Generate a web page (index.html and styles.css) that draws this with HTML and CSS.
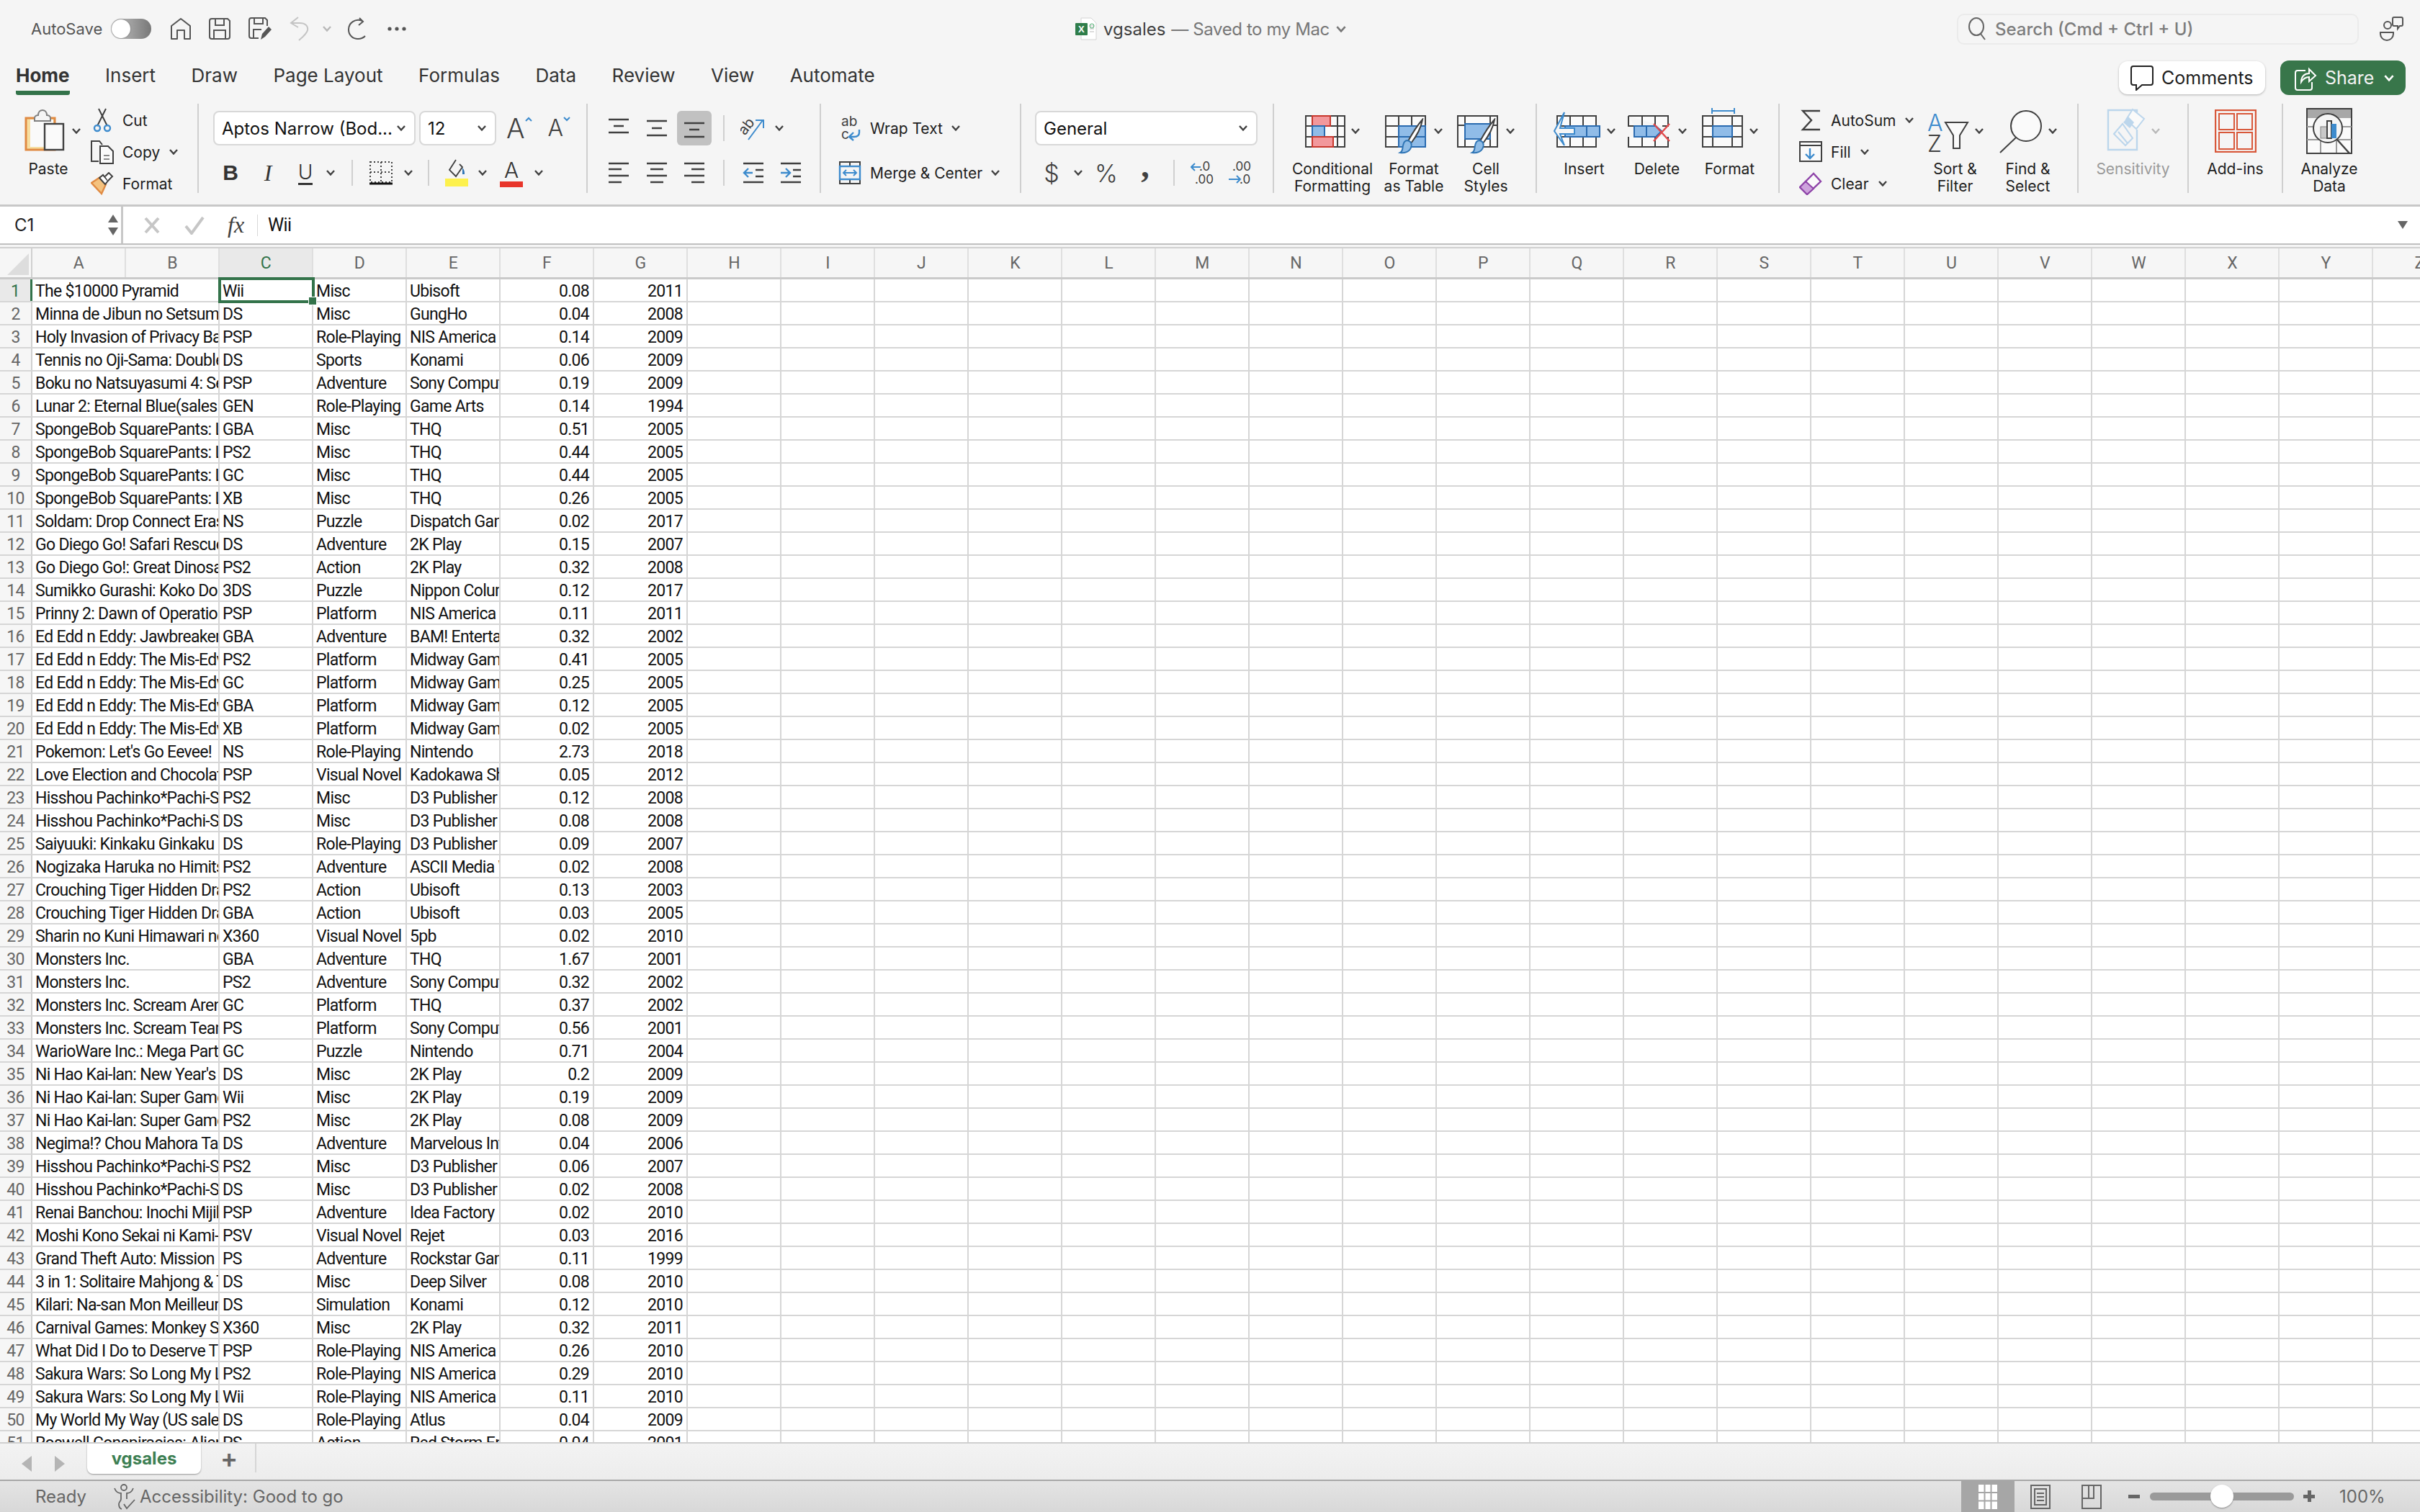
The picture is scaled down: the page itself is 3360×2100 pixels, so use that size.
FILE: index.html
```html
<!DOCTYPE html>
<html lang="en">

<head>
    <meta charset="UTF-8">
    <title>vgsales</title>
    <link rel="stylesheet" href="styles.css">
</head>

<body>
    <svg class="defs" width="0" height="0">
        <symbol id="chev" viewBox="0 0 12 8"><path d="M1 1l5 5.5L11 1" fill="none" stroke="currentColor" stroke-width="2.4"/></symbol>
        <symbol id="brush" viewBox="0 0 36 50"><path d="M33 2C31 14 24 26 17 35l-4-3C19 21 26 10 33 2z" fill="#fff" stroke="#404040" stroke-width="2"/><path d="M12 31c5 1 7 5 5 10-2 6-9 8-15 7 4-2 3-6 4-10 1-5 3-7 6-7z" fill="#8fbce6" stroke="#2f75b5" stroke-width="2"/></symbol>
        <symbol id="align" viewBox="0 0 30 24"><path d="M1 2h28M8 12h14M1 22h28" stroke="#404040" stroke-width="2.4"/></symbol>
    </svg>

    <!-- title bar -->
    <header class="title-bar">
        <div class="quick">
            <span class="autosave">AutoSave</span>
            <span class="toggle"></span>
            <svg class="q-home" width="30" height="32" viewBox="0 0 30 32"><path d="M2 30V12L15 2l13 10v18h-8V18h-10v12z" fill="none" stroke="#555" stroke-width="2" stroke-linejoin="round"/></svg>
            <svg class="q-save" width="30" height="30" viewBox="0 0 30 30"><path d="M4 1h22l3 3v22a3 3 0 0 1-3 3H4a3 3 0 0 1-3-3V4a3 3 0 0 1 3-3zM9 1v9h12V1M7 29V17h16v12" fill="none" stroke="#555" stroke-width="2"/></svg>
            <svg class="q-saveas" width="32" height="32" viewBox="0 0 32 32"><path d="M14 29H4a3 3 0 0 1-3-3V4a3 3 0 0 1 3-3h19l3 3v8M8 1v8h12V1M7 29V17h11" fill="none" stroke="#555" stroke-width="2"/><path d="M17 31l2-8 9-10 4 4-9 10z" fill="#555"/></svg>
            <svg class="q-undo" width="28" height="34" viewBox="0 0 28 34"><path d="M12 1L2 9l10 6M2 9h12c8 0 12 4 11 10-1 4-6 9-12 14" fill="none" stroke="#c4c4c4" stroke-width="2"/></svg>
            <svg class="chev q-chev" width="12" height="8"><use href="#chev"/></svg>
            <svg class="q-redo" width="30" height="32" viewBox="0 0 30 32"><path d="M21 5C11 1 2 8 2 17c0 8 6 13 13 13 4 0 7-1 10-4M17 1l5 5-6 5" fill="none" stroke="#555" stroke-width="2"/></svg>
            <svg class="q-dots" width="26" height="6" viewBox="0 0 26 6"><circle cx="3" cy="3" r="2.6" fill="#555"/><circle cx="13" cy="3" r="2.6" fill="#555"/><circle cx="23" cy="3" r="2.6" fill="#555"/></svg>
        </div>
        <div class="doc-title">
            <svg width="30" height="32" viewBox="0 0 30 32"><path d="M8 1h14l7 7v23H8z" fill="#fff" stroke="#d4d4d4"/><path d="M20 12h6M20 16h6M20 20h6" stroke="#bbb"/><circle cx="23" cy="12" r="3" fill="none" stroke="#4aa96c"/><rect x="0" y="8" width="17" height="17" rx="1" fill="#2f7d4a"/><text x="4" y="21" class="x-mark">X</text></svg>
            <span class="doc-name">vgsales</span>
            <span class="doc-state">— Saved to my Mac</span>
            <svg class="chev doc-chev" width="14" height="9"><use href="#chev"/></svg>
        </div>
        <div class="search">
            <svg width="26" height="32" viewBox="0 0 26 32"><ellipse cx="12" cy="13" rx="10" ry="12" fill="none" stroke="#666" stroke-width="2"/><path d="M18 23l6 8" stroke="#666" stroke-width="2"/></svg>
            <span>Search (Cmd + Ctrl + U)</span>
        </div>
        <svg class="people" width="34" height="34" viewBox="0 0 34 34"><circle cx="12" cy="12" r="5" fill="none" stroke="#555" stroke-width="2"/><path d="M2 22h18v2a9 9 0 0 1-18 0z" fill="none" stroke="#555" stroke-width="2"/><path d="M21 1h10a2 2 0 0 1 2 2v8a2 2 0 0 1-2 2h-2l-3 4v-4h-5a2 2 0 0 1-2-2V3a2 2 0 0 1 2-2z" fill="none" stroke="#555" stroke-width="2"/></svg>
    </header>

    <!-- ribbon tabs -->
    <nav class="tabs">
        <span class="tab active">Home</span>
        <span class="tab">Insert</span>
        <span class="tab">Draw</span>
        <span class="tab">Page Layout</span>
        <span class="tab">Formulas</span>
        <span class="tab">Data</span>
        <span class="tab">Review</span>
        <span class="tab">View</span>
        <span class="tab">Automate</span>
        <div class="tab-actions">
            <button class="comments">
                <svg width="34" height="36" viewBox="0 0 34 36"><path d="M5 2h24a3 3 0 0 1 3 3v20a3 3 0 0 1-3 3H17l-8 7v-7H5a3 3 0 0 1-3-3V5a3 3 0 0 1 3-3z" fill="#fff" stroke="#222" stroke-width="2"/></svg>
                Comments
            </button>
            <button class="share">
                <svg width="32" height="36" viewBox="0 0 32 36"><path d="M16 8H5a3 3 0 0 0-3 3v21a3 3 0 0 0 3 3h17a3 3 0 0 0 3-3v-8" fill="none" stroke="#fff" stroke-width="2"/><path d="M10 24c0-8 5-12 11-12V6l9 9-9 8v-6c-5 0-8 2-11 7z" fill="none" stroke="#fff" stroke-width="2"/></svg>
                Share
                <svg class="chev share-chev" width="14" height="9"><use href="#chev"/></svg>
            </button>
        </div>
    </nav>

    <!-- ribbon -->
    <section class="ribbon">
        <div class="group g-clip">
            <div class="big paste">
                <div class="ico">
                    <svg width="56" height="64" viewBox="0 0 56 64"><rect x="2" y="14" width="40" height="44" fill="#f7dea0" stroke="#e08a42" stroke-width="3"/><rect x="8" y="16" width="32" height="38" fill="#fafafa"/><path d="M14 14c0-3 3-4 5-4 0-5 3-7 6-7s6 2 6 7c2 0 5 1 5 4v4H14z" fill="#f5f5f5" stroke="#808080" stroke-width="2"/><rect x="28" y="22" width="26" height="36" fill="#fafafa" stroke="#404040" stroke-width="2.4"/></svg>
                    <svg class="chev paste-chev" width="12" height="8"><use href="#chev"/></svg>
                </div>
                <span class="big-label">Paste</span>
            </div>
            <div class="small-list">
                <div class="small">
                    <svg width="32" height="34" viewBox="0 0 32 34"><path d="M11 1l12 24M21 1L9 25" stroke="#404040" stroke-width="2"/><circle cx="9" cy="28" r="4" fill="none" stroke="#3d8bcd" stroke-width="2.4"/><circle cx="23" cy="28" r="4" fill="none" stroke="#3d8bcd" stroke-width="2.4"/></svg>
                    <span>Cut</span>
                </div>
                <div class="small">
                    <svg width="32" height="34" viewBox="0 0 32 34"><path d="M11 30H1V2h11l4 5" fill="none" stroke="#404040" stroke-width="2"/><path d="M13 9h11l7 7v17H13z" fill="#fafafa" stroke="#404040" stroke-width="2"/><path d="M18 22h8M18 27h8" stroke="#666" stroke-width="1.6"/></svg>
                    <span>Copy</span>
                    <svg class="chev" width="12" height="8"><use href="#chev"/></svg>
                </div>
                <div class="small">
                    <svg width="32" height="32" viewBox="0 0 32 32"><path d="M1 15l12-8 8 10-6 13z" fill="#f4c27f" stroke="#e08a42" stroke-width="2.4"/><path d="M12 8l8 9 4-5-7-8z" fill="#fff" stroke="#404040" stroke-width="2"/><path d="M20 6l5-5 5 5-6 6" fill="#fff" stroke="#404040" stroke-width="2"/></svg>
                    <span>Format</span>
                </div>
            </div>
        </div>

        <div class="group g-font">
            <div class="font-row-a">
                <div class="select font-name"><span>Aptos Narrow (Bod...</span><svg class="chev" width="12" height="8"><use href="#chev"/></svg></div>
                <div class="select font-size"><span>12</span><svg class="chev" width="12" height="8"><use href="#chev"/></svg></div>
                <span class="grow">A<svg width="10" height="7" viewBox="0 0 10 7"><path d="M1 6l4-4 4 4" fill="none" stroke="#3d8bcd" stroke-width="2"/></svg></span>
                <span class="shrink">A<svg width="10" height="7" viewBox="0 0 10 7"><path d="M1 1l4 4 4-4" fill="none" stroke="#3d8bcd" stroke-width="2"/></svg></span>
            </div>
            <div class="font-row-b">
                <span class="t-bold">B</span>
                <span class="t-ital">I</span>
                <span class="t-under">U</span>
                <svg class="chev" width="12" height="8"><use href="#chev"/></svg>
                <i class="vsep"></i>
                <svg width="32" height="34" viewBox="0 0 32 34"><path d="M1 2h30v28H1zM16 2v28M1 16h30" fill="none" stroke="#404040" stroke-width="2" stroke-dasharray="2 3"/><path d="M0 32h32" stroke="#111" stroke-width="3"/></svg>
                <svg class="chev" width="12" height="8"><use href="#chev"/></svg>
                <i class="vsep"></i>
                <svg width="34" height="38" viewBox="0 0 34 38"><path d="M16 1l-9 14 9 9 9-13-4-4" fill="#f5f5f5" stroke="#404040" stroke-width="1.8"/><path d="M25 12c3 3 3 6 3 9h-3z" fill="#2f75b5"/><rect x="1" y="27" width="32" height="11" fill="#fdf14d"/></svg>
                <svg class="chev" width="12" height="8"><use href="#chev"/></svg>
                <span class="t-color">A</span>
                <svg class="chev" width="12" height="8"><use href="#chev"/></svg>
            </div>
        </div>

        <div class="group g-align">
            <div class="align-row-a">
                <svg width="30" height="30" viewBox="0 0 30 30"><path d="M1 3h28M8 12h14M1 21h28" stroke="#404040" stroke-width="2.4"/></svg>
                <svg width="30" height="30" viewBox="0 0 30 30"><use href="#align" width="30" height="24" y="3"/></svg>
                <span class="on-box"><svg width="30" height="30" viewBox="0 0 30 30"><path d="M1 8h28M8 17h14M1 27h28" stroke="#404040" stroke-width="2.4"/></svg></span>
                <i class="vsep"></i>
                <svg width="34" height="34" viewBox="0 0 34 34"><text x="0" y="21" transform="rotate(-52 10 18)" class="orient">ab</text><path d="M11 33L31 6M21 6h11v11" fill="none" stroke="#3d8bcd" stroke-width="2"/></svg>
                <svg class="chev" width="12" height="8"><use href="#chev"/></svg>
            </div>
            <div class="align-row-b">
                <svg width="30" height="30" viewBox="0 0 30 30"><path d="M1 2h28M1 10h18M1 19h28M1 28h18" stroke="#404040" stroke-width="2.4"/></svg>
                <svg width="30" height="30" viewBox="0 0 30 30"><path d="M1 2h28M6 10h18M1 19h28M6 28h18" stroke="#404040" stroke-width="2.4"/></svg>
                <svg width="30" height="30" viewBox="0 0 30 30"><path d="M1 2h28M11 10h18M1 19h28M11 28h18" stroke="#404040" stroke-width="2.4"/></svg>
                <i class="vsep"></i>
                <svg width="30" height="30" viewBox="0 0 30 30"><path d="M1 2h28M18 11h11M18 20h11M1 28h28" stroke="#404040" stroke-width="2.4"/><path d="M14 15H2M8 9l-6 6 6 6" fill="none" stroke="#3d8bcd" stroke-width="2.4"/></svg>
                <svg width="30" height="30" viewBox="0 0 30 30"><path d="M1 2h28M18 11h11M18 20h11M1 28h28" stroke="#404040" stroke-width="2.4"/><path d="M1 15h12M8 9l6 6-6 6" fill="none" stroke="#3d8bcd" stroke-width="2.4"/></svg>
            </div>
        </div>

        <div class="group g-wrap">
            <div class="wrap-item">
                <svg width="32" height="36" viewBox="0 0 32 36"><text x="4" y="15" class="wrap-ab">ab</text><text x="4" y="33" class="wrap-ab">c</text><path d="M29 20v4c0 4-3 6-7 6h-6M21 24l-6 6 6 5" fill="none" stroke="#3d8bcd" stroke-width="2.4"/></svg>
                <span>Wrap Text</span>
                <svg class="chev" width="12" height="8"><use href="#chev"/></svg>
            </div>
            <div class="wrap-item">
                <svg width="32" height="32" viewBox="0 0 32 32"><path d="M2 1h28v30H2zM16 1v6M16 25v6M2 7h28" fill="none" stroke="#404040" stroke-width="2"/><rect x="2" y="7" width="28" height="18" fill="none" stroke="#3d8bcd" stroke-width="2.4"/><path d="M7 16h18M11 12l-4 4 4 4M21 12l4 4-4 4" fill="none" stroke="#3d8bcd" stroke-width="2"/></svg>
                <span>Merge &amp; Center</span>
                <svg class="chev" width="12" height="8"><use href="#chev"/></svg>
            </div>
        </div>

        <div class="group g-number">
            <div class="select num-format"><span>General</span><svg class="chev" width="12" height="8"><use href="#chev"/></svg></div>
            <div class="number-row">
                <span class="t-dollar">$</span>
                <svg class="chev" width="12" height="8"><use href="#chev"/></svg>
                <span class="t-pct">%</span>
                <span class="t-comma">,</span>
                <i class="vsep"></i>
                <svg class="dec-ico" width="36" height="34" viewBox="0 0 36 34"><text x="12" y="14" class="dec">.0</text><text x="6" y="32" class="dec">.00</text><path d="M14 9H1M6 4L1 9l5 5" fill="none" stroke="#3d8bcd" stroke-width="2"/></svg>
                <svg class="dec-ico" width="36" height="34" viewBox="0 0 36 34"><text x="6" y="14" class="dec">.00</text><text x="16" y="32" class="dec">.0</text><path d="M1 26h16M12 21l5 5-5 5" fill="none" stroke="#3d8bcd" stroke-width="2"/></svg>
            </div>
        </div>

        <div class="group g-styles">
            <div class="big w-cond">
                <div class="ico">
                    <svg width="56" height="64" viewBox="0 0 56 64"><path d="M1 11h54v43H1zM10 11v43M27 11v43M45 11v43M1 25h54M1 40h54" fill="#fafafa" stroke="#404040" stroke-width="2"/><rect x="10" y="11" width="25" height="14" fill="#f2989c" stroke="#c8372d" stroke-width="2"/><rect x="10" y="25" width="17" height="15" fill="#90bce8" stroke="#2a6bb0" stroke-width="2"/><rect x="10" y="40" width="29" height="14" fill="#f2989c" stroke="#c8372d" stroke-width="2"/></svg>
                    <svg class="chev" width="12" height="8"><use href="#chev"/></svg>
                </div>
                <span class="big-label">Conditional<br>Formatting</span>
            </div>
            <div class="big w-table">
                <div class="ico">
                    <svg width="60" height="64" viewBox="0 0 60 64"><path d="M1 11h55v43H1zM19 11v43M37 11v43M1 25h55M1 40h55" fill="#fafafa" stroke="#404040" stroke-width="2"/><path d="M19 25h37v29H19z" fill="#90bce8" stroke="#2a6bb0" stroke-width="2"/><path d="M19 40h37" stroke="#2a6bb0" stroke-width="2"/><use href="#brush" x="15" y="14" width="44" height="50"/></svg>
                    <svg class="chev" width="12" height="8"><use href="#chev"/></svg>
                </div>
                <span class="big-label">Format<br>as Table</span>
            </div>
            <div class="big w-cellst">
                <div class="ico">
                    <svg width="60" height="64" viewBox="0 0 60 64"><path d="M1 11h55v43H1zM1 24h55M11 11v43M46 11v43" fill="#fafafa" stroke="#404040" stroke-width="2"/><rect x="11" y="22" width="35" height="21" fill="#90bce8" stroke="#2a6bb0" stroke-width="2"/><use href="#brush" x="15" y="14" width="44" height="50"/></svg>
                    <svg class="chev" width="12" height="8"><use href="#chev"/></svg>
                </div>
                <span class="big-label">Cell<br>Styles</span>
            </div>
        </div>

        <div class="group g-cells">
            <div class="big w-cell">
                <div class="ico">
                    <svg width="66" height="64" viewBox="0 0 66 64"><path d="M5 11h54v43H5zM23 11v43M41 11v43M5 25h54M5 40h54" fill="#fafafa" stroke="#404040" stroke-width="2"/><rect x="16" y="25" width="48" height="15" fill="#90bce8" stroke="#2a6bb0" stroke-width="2"/><path d="M46 25v15" stroke="#2a6bb0" stroke-width="2"/><path d="M15 6L1 32l14 20-6-16h20V28H9z" fill="#f5f5f5" stroke="#3d8bcd" stroke-width="2"/></svg>
                    <svg class="chev" width="12" height="8"><use href="#chev"/></svg>
                </div>
                <span class="big-label">Insert</span>
            </div>
            <div class="big w-cell">
                <div class="ico">
                    <svg width="62" height="64" viewBox="0 0 62 64"><path d="M1 11h55v14h-8M1 11v14h8M1 40v14h55V40M20 11v14M38 11v14M20 40v14M38 40v14" fill="#fafafa" stroke="#404040" stroke-width="2"/><path d="M9 25h30l8 7-8 8H9z" fill="#90bce8" stroke="#2a6bb0" stroke-width="2"/><path d="M26 25v15" stroke="#2a6bb0" stroke-width="2"/><path d="M36 22l22 24M58 22L36 46" stroke="#e0484a" stroke-width="2.4"/></svg>
                    <svg class="chev" width="12" height="8"><use href="#chev"/></svg>
                </div>
                <span class="big-label">Delete</span>
            </div>
            <div class="big w-cell">
                <div class="ico">
                    <svg width="58" height="64" viewBox="0 0 58 64"><path d="M1 11h55v43H1zM15 11v43M42 11v43M1 25h55M1 40h55" fill="#fafafa" stroke="#404040" stroke-width="2"/><rect x="15" y="25" width="27" height="15" fill="#90bce8" stroke="#2a6bb0" stroke-width="2"/><path d="M14 0v8M45 0v8M14 4h31" stroke="#3d8bcd" stroke-width="2"/></svg>
                    <svg class="chev" width="12" height="8"><use href="#chev"/></svg>
                </div>
                <span class="big-label">Format</span>
            </div>
        </div>

        <div class="group g-edit">
            <div class="small-list">
                <div class="small">
                    <svg width="32" height="30" viewBox="0 0 32 30"><path d="M29 2H5l12 13L5 28h24" fill="none" stroke="#404040" stroke-width="2.4"/></svg>
                    <span>AutoSum</span>
                    <svg class="chev" width="12" height="8"><use href="#chev"/></svg>
                </div>
                <div class="small">
                    <svg width="32" height="30" viewBox="0 0 32 30"><path d="M1 1h30v27H1zM1 6h30" fill="#fafafa" stroke="#404040" stroke-width="2"/><path d="M15 10v13M9 18l6 6 6-6" fill="none" stroke="#3d8bcd" stroke-width="2.4"/></svg>
                    <span>Fill</span>
                    <svg class="chev" width="12" height="8"><use href="#chev"/></svg>
                </div>
                <div class="small">
                    <svg width="32" height="32" viewBox="0 0 32 32"><path d="M1 21L20 2l10 11-19 18z" fill="#fafafa" stroke="#8e44a8" stroke-width="2.4"/><path d="M1 21l8-8 11 10-9 8z" fill="#cda2dc" stroke="#8e44a8" stroke-width="2"/></svg>
                    <span>Clear</span>
                    <svg class="chev" width="12" height="8"><use href="#chev"/></svg>
                </div>
            </div>
            <div class="big w-edit">
                <div class="ico">
                    <svg width="58" height="64" viewBox="0 0 58 64"><text x="0" y="32" class="az-a">A</text><text x="0" y="61" class="az-z">Z</text><path d="M25 20h31L45 38v18h-9V38z" fill="#fafafa" stroke="#404040" stroke-width="2"/></svg>
                    <svg class="chev" width="12" height="8"><use href="#chev"/></svg>
                </div>
                <span class="big-label">Sort &amp;<br>Filter</span>
            </div>
            <div class="big w-edit">
                <div class="ico">
                    <svg width="60" height="64" viewBox="0 0 60 64"><ellipse cx="37" cy="25" rx="21" ry="21" fill="#fafafa" stroke="#404040" stroke-width="2"/><path d="M23 41L1 62" stroke="#404040" stroke-width="2"/></svg>
                    <svg class="chev" width="12" height="8"><use href="#chev"/></svg>
                </div>
                <span class="big-label">Find &amp;<br>Select</span>
            </div>
        </div>

        <div class="group g-sens">
            <div class="big w-sens">
                <div class="ico">
                    <svg width="54" height="64" viewBox="0 0 54 64"><path d="M42 6V3H2v55h40V30" fill="none" stroke="#bcd6ec" stroke-width="2.4"/><path d="M36 2l16 13-11 14-14-13z" fill="#fafafa" stroke="#bcd6ec" stroke-width="2"/><path d="M30 12l8 8-6 8-9-8z" fill="#bcd6ec"/><path d="M10 36l12-14 14 20-10 10z" fill="none" stroke="#bcd6ec" stroke-width="2"/><path d="M16 33l13 16" stroke="#bcd6ec" stroke-width="2"/></svg>
                    <svg class="chev sens-chev" width="12" height="8"><use href="#chev"/></svg>
                </div>
                <span class="big-label sens-label">Sensitivity</span>
            </div>
        </div>

        <div class="group g-addins">
            <div class="big w-addins">
                <div class="ico">
                    <svg width="58" height="60" viewBox="0 0 58 60"><rect x="1" y="1" width="56" height="58" fill="none" stroke="#d8583a" stroke-width="2.4"/><path d="M6 6h21v22H6zM31 6h21v22H31zM6 32h21v23H6zM31 32h21v23H31z" fill="none" stroke="#d8583a" stroke-width="2"/></svg>
                </div>
                <span class="big-label">Add-ins</span>
            </div>
        </div>

        <div class="group g-analyze">
            <div class="big w-analyze">
                <div class="ico">
                    <svg width="64" height="64" viewBox="0 0 64 64"><rect x="1" y="1" width="62" height="62" fill="#fafafa" stroke="#404040" stroke-width="2"/><rect x="2" y="2" width="60" height="12" fill="#a8a8a8"/><path d="M1 26h62M1 44h62M20 44v18M42 44v18" stroke="#9a9a9a" stroke-width="2"/><circle cx="30" cy="28" r="20" fill="#f5f5f5" stroke="#404040" stroke-width="2"/><rect x="20" y="26" width="10" height="16" fill="#c8c8c8" stroke="#808080"/><rect x="29" y="18" width="6" height="24" fill="#f5f5f5" stroke="#404040" stroke-width="2"/><rect x="35" y="22" width="7" height="20" fill="#3d8bcd"/><path d="M43 44l18 20" stroke="#404040" stroke-width="2.4"/></svg>
                </div>
                <span class="big-label">Analyze<br>Data</span>
            </div>
        </div>
    </section>

    <!-- formula bar -->
    <section class="formula-bar">
        <div class="name-box">
            <span>C1</span>
            <div class="stepper"><i class="tri-up"></i><i class="tri-down"></i></div>
        </div>
        <svg class="fb-x" width="24" height="26" viewBox="0 0 24 26"><path d="M3 3l18 20M21 3L3 23" stroke="#c6c6c6" stroke-width="4"/></svg>
        <svg class="fb-ok" width="28" height="26" viewBox="0 0 28 26"><path d="M2 14l8 10L26 2" fill="none" stroke="#c6c6c6" stroke-width="4"/></svg>
        <span class="fx">fx</span>
        <i class="fb-sep"></i>
        <span class="fb-value">Wii</span>
        <i class="tri-down fb-more"></i>
    </section>

    <!-- sheet -->
    <main class="sheet">
        <div class="col-heads">
            <div class="corner"><i></i></div>
            <span>A</span><span>B</span><span class="sel">C</span><span>D</span><span>E</span><span>F</span><span>G</span><span>H</span><span>I</span><span>J</span><span>K</span><span>L</span><span>M</span><span>N</span><span>O</span><span>P</span><span>Q</span><span>R</span><span>S</span><span>T</span><span>U</span><span>V</span><span>W</span><span>X</span><span>Y</span><span>Z</span>
        </div>
        <div class="row first"><b class="rh">1</b><span class="c a">The $10000 Pyramid</span><span class="c">Wii</span><span class="c">Misc</span><span class="c">Ubisoft</span><span class="c n">0.08</span><span class="c n">2011</span><i></i></div>
        <div class="row"><b class="rh">2</b><span class="c a">Minna de Jibun no Setsumei Shoki</span><span class="c">DS</span><span class="c">Misc</span><span class="c">GungHo</span><span class="c n">0.04</span><span class="c n">2008</span><i></i></div>
        <div class="row"><b class="rh">3</b><span class="c a">Holy Invasion of Privacy Badman</span><span class="c">PSP</span><span class="c">Role-Playing</span><span class="c">NIS America</span><span class="c n">0.14</span><span class="c n">2009</span><i></i></div>
        <div class="row"><b class="rh">4</b><span class="c a">Tennis no Oji-Sama: Doubles</span><span class="c">DS</span><span class="c">Sports</span><span class="c">Konami</span><span class="c n">0.06</span><span class="c n">2009</span><i></i></div>
        <div class="row"><b class="rh">5</b><span class="c a">Boku no Natsuyasumi 4: Seto</span><span class="c">PSP</span><span class="c">Adventure</span><span class="c">Sony Computer</span><span class="c n">0.19</span><span class="c n">2009</span><i></i></div>
        <div class="row"><b class="rh">6</b><span class="c a">Lunar 2: Eternal Blue(sales only)</span><span class="c">GEN</span><span class="c">Role-Playing</span><span class="c">Game Arts</span><span class="c n">0.14</span><span class="c n">1994</span><i></i></div>
        <div class="row"><b class="rh">7</b><span class="c a">SpongeBob SquarePants: Lights</span><span class="c">GBA</span><span class="c">Misc</span><span class="c">THQ</span><span class="c n">0.51</span><span class="c n">2005</span><i></i></div>
        <div class="row"><b class="rh">8</b><span class="c a">SpongeBob SquarePants: Lights</span><span class="c">PS2</span><span class="c">Misc</span><span class="c">THQ</span><span class="c n">0.44</span><span class="c n">2005</span><i></i></div>
        <div class="row"><b class="rh">9</b><span class="c a">SpongeBob SquarePants: Lights</span><span class="c">GC</span><span class="c">Misc</span><span class="c">THQ</span><span class="c n">0.44</span><span class="c n">2005</span><i></i></div>
        <div class="row"><b class="rh">10</b><span class="c a">SpongeBob SquarePants: Lights</span><span class="c">XB</span><span class="c">Misc</span><span class="c">THQ</span><span class="c n">0.26</span><span class="c n">2005</span><i></i></div>
        <div class="row"><b class="rh">11</b><span class="c a">Soldam: Drop Connect Erase</span><span class="c">NS</span><span class="c">Puzzle</span><span class="c">Dispatch Games</span><span class="c n">0.02</span><span class="c n">2017</span><i></i></div>
        <div class="row"><b class="rh">12</b><span class="c a">Go Diego Go! Safari Rescue</span><span class="c">DS</span><span class="c">Adventure</span><span class="c">2K Play</span><span class="c n">0.15</span><span class="c n">2007</span><i></i></div>
        <div class="row"><b class="rh">13</b><span class="c a">Go Diego Go!: Great Dinosaur</span><span class="c">PS2</span><span class="c">Action</span><span class="c">2K Play</span><span class="c n">0.32</span><span class="c n">2008</span><i></i></div>
        <div class="row"><b class="rh">14</b><span class="c a">Sumikko Gurashi: Koko Dokode</span><span class="c">3DS</span><span class="c">Puzzle</span><span class="c">Nippon Columbia</span><span class="c n">0.12</span><span class="c n">2017</span><i></i></div>
        <div class="row"><b class="rh">15</b><span class="c a">Prinny 2: Dawn of Operation</span><span class="c">PSP</span><span class="c">Platform</span><span class="c">NIS America</span><span class="c n">0.11</span><span class="c n">2011</span><i></i></div>
        <div class="row"><b class="rh">16</b><span class="c a">Ed Edd n Eddy: Jawbreakers!</span><span class="c">GBA</span><span class="c">Adventure</span><span class="c">BAM! Entertainment</span><span class="c n">0.32</span><span class="c n">2002</span><i></i></div>
        <div class="row"><b class="rh">17</b><span class="c a">Ed Edd n Eddy: The Mis-Edventures</span><span class="c">PS2</span><span class="c">Platform</span><span class="c">Midway Games</span><span class="c n">0.41</span><span class="c n">2005</span><i></i></div>
        <div class="row"><b class="rh">18</b><span class="c a">Ed Edd n Eddy: The Mis-Edventures</span><span class="c">GC</span><span class="c">Platform</span><span class="c">Midway Games</span><span class="c n">0.25</span><span class="c n">2005</span><i></i></div>
        <div class="row"><b class="rh">19</b><span class="c a">Ed Edd n Eddy: The Mis-Edventures</span><span class="c">GBA</span><span class="c">Platform</span><span class="c">Midway Games</span><span class="c n">0.12</span><span class="c n">2005</span><i></i></div>
        <div class="row"><b class="rh">20</b><span class="c a">Ed Edd n Eddy: The Mis-Edventures</span><span class="c">XB</span><span class="c">Platform</span><span class="c">Midway Games</span><span class="c n">0.02</span><span class="c n">2005</span><i></i></div>
        <div class="row"><b class="rh">21</b><span class="c a">Pokemon: Let's Go Eevee!</span><span class="c">NS</span><span class="c">Role-Playing</span><span class="c">Nintendo</span><span class="c n">2.73</span><span class="c n">2018</span><i></i></div>
        <div class="row"><b class="rh">22</b><span class="c a">Love Election and Chocolate</span><span class="c">PSP</span><span class="c">Visual Novel</span><span class="c">Kadokawa Shoten</span><span class="c n">0.05</span><span class="c n">2012</span><i></i></div>
        <div class="row"><b class="rh">23</b><span class="c a">Hisshou Pachinko*Pachi-Slot</span><span class="c">PS2</span><span class="c">Misc</span><span class="c">D3 Publisher</span><span class="c n">0.12</span><span class="c n">2008</span><i></i></div>
        <div class="row"><b class="rh">24</b><span class="c a">Hisshou Pachinko*Pachi-Slot</span><span class="c">DS</span><span class="c">Misc</span><span class="c">D3 Publisher</span><span class="c n">0.08</span><span class="c n">2008</span><i></i></div>
        <div class="row"><b class="rh">25</b><span class="c a">Saiyuuki: Kinkaku Ginkaku no</span><span class="c">DS</span><span class="c">Role-Playing</span><span class="c">D3 Publisher</span><span class="c n">0.09</span><span class="c n">2007</span><i></i></div>
        <div class="row"><b class="rh">26</b><span class="c a">Nogizaka Haruka no Himitsu</span><span class="c">PS2</span><span class="c">Adventure</span><span class="c">ASCII Media Works</span><span class="c n">0.02</span><span class="c n">2008</span><i></i></div>
        <div class="row"><b class="rh">27</b><span class="c a">Crouching Tiger Hidden Dragon</span><span class="c">PS2</span><span class="c">Action</span><span class="c">Ubisoft</span><span class="c n">0.13</span><span class="c n">2003</span><i></i></div>
        <div class="row"><b class="rh">28</b><span class="c a">Crouching Tiger Hidden Dragon</span><span class="c">GBA</span><span class="c">Action</span><span class="c">Ubisoft</span><span class="c n">0.03</span><span class="c n">2005</span><i></i></div>
        <div class="row"><b class="rh">29</b><span class="c a">Sharin no Kuni Himawari no Shoujo</span><span class="c">X360</span><span class="c">Visual Novel</span><span class="c">5pb</span><span class="c n">0.02</span><span class="c n">2010</span><i></i></div>
        <div class="row"><b class="rh">30</b><span class="c a">Monsters Inc.</span><span class="c">GBA</span><span class="c">Adventure</span><span class="c">THQ</span><span class="c n">1.67</span><span class="c n">2001</span><i></i></div>
        <div class="row"><b class="rh">31</b><span class="c a">Monsters Inc.</span><span class="c">PS2</span><span class="c">Adventure</span><span class="c">Sony Computer</span><span class="c n">0.32</span><span class="c n">2002</span><i></i></div>
        <div class="row"><b class="rh">32</b><span class="c a">Monsters Inc. Scream Arena</span><span class="c">GC</span><span class="c">Platform</span><span class="c">THQ</span><span class="c n">0.37</span><span class="c n">2002</span><i></i></div>
        <div class="row"><b class="rh">33</b><span class="c a">Monsters Inc. Scream Team</span><span class="c">PS</span><span class="c">Platform</span><span class="c">Sony Computer</span><span class="c n">0.56</span><span class="c n">2001</span><i></i></div>
        <div class="row"><b class="rh">34</b><span class="c a">WarioWare Inc.: Mega Party</span><span class="c">GC</span><span class="c">Puzzle</span><span class="c">Nintendo</span><span class="c n">0.71</span><span class="c n">2004</span><i></i></div>
        <div class="row"><b class="rh">35</b><span class="c a">Ni Hao Kai-lan: New Year's</span><span class="c">DS</span><span class="c">Misc</span><span class="c">2K Play</span><span class="c n">0.2</span><span class="c n">2009</span><i></i></div>
        <div class="row"><b class="rh">36</b><span class="c a">Ni Hao Kai-lan: Super Game</span><span class="c">Wii</span><span class="c">Misc</span><span class="c">2K Play</span><span class="c n">0.19</span><span class="c n">2009</span><i></i></div>
        <div class="row"><b class="rh">37</b><span class="c a">Ni Hao Kai-lan: Super Game</span><span class="c">PS2</span><span class="c">Misc</span><span class="c">2K Play</span><span class="c n">0.08</span><span class="c n">2009</span><i></i></div>
        <div class="row"><b class="rh">38</b><span class="c a">Negima!? Chou Mahora Taisen</span><span class="c">DS</span><span class="c">Adventure</span><span class="c">Marvelous Interactive</span><span class="c n">0.04</span><span class="c n">2006</span><i></i></div>
        <div class="row"><b class="rh">39</b><span class="c a">Hisshou Pachinko*Pachi-Slot</span><span class="c">PS2</span><span class="c">Misc</span><span class="c">D3 Publisher</span><span class="c n">0.06</span><span class="c n">2007</span><i></i></div>
        <div class="row"><b class="rh">40</b><span class="c a">Hisshou Pachinko*Pachi-Slot</span><span class="c">DS</span><span class="c">Misc</span><span class="c">D3 Publisher</span><span class="c n">0.02</span><span class="c n">2008</span><i></i></div>
        <div class="row"><b class="rh">41</b><span class="c a">Renai Banchou: Inochi Mijikashi</span><span class="c">PSP</span><span class="c">Adventure</span><span class="c">Idea Factory</span><span class="c n">0.02</span><span class="c n">2010</span><i></i></div>
        <div class="row"><b class="rh">42</b><span class="c a">Moshi Kono Sekai ni Kami-sama</span><span class="c">PSV</span><span class="c">Visual Novel</span><span class="c">Rejet</span><span class="c n">0.03</span><span class="c n">2016</span><i></i></div>
        <div class="row"><b class="rh">43</b><span class="c a">Grand Theft Auto: Mission Pack</span><span class="c">PS</span><span class="c">Adventure</span><span class="c">Rockstar Games</span><span class="c n">0.11</span><span class="c n">1999</span><i></i></div>
        <div class="row"><b class="rh">44</b><span class="c a">3 in 1: Solitaire Mahjong &amp; Tangram</span><span class="c">DS</span><span class="c">Misc</span><span class="c">Deep Silver</span><span class="c n">0.08</span><span class="c n">2010</span><i></i></div>
        <div class="row"><b class="rh">45</b><span class="c a">Kilari: Na-san Mon Meilleur Ami</span><span class="c">DS</span><span class="c">Simulation</span><span class="c">Konami</span><span class="c n">0.12</span><span class="c n">2010</span><i></i></div>
        <div class="row"><b class="rh">46</b><span class="c a">Carnival Games: Monkey See</span><span class="c">X360</span><span class="c">Misc</span><span class="c">2K Play</span><span class="c n">0.32</span><span class="c n">2011</span><i></i></div>
        <div class="row"><b class="rh">47</b><span class="c a">What Did I Do to Deserve This</span><span class="c">PSP</span><span class="c">Role-Playing</span><span class="c">NIS America</span><span class="c n">0.26</span><span class="c n">2010</span><i></i></div>
        <div class="row"><b class="rh">48</b><span class="c a">Sakura Wars: So Long My Love</span><span class="c">PS2</span><span class="c">Role-Playing</span><span class="c">NIS America</span><span class="c n">0.29</span><span class="c n">2010</span><i></i></div>
        <div class="row"><b class="rh">49</b><span class="c a">Sakura Wars: So Long My Love</span><span class="c">Wii</span><span class="c">Role-Playing</span><span class="c">NIS America</span><span class="c n">0.11</span><span class="c n">2010</span><i></i></div>
        <div class="row"><b class="rh">50</b><span class="c a">My World My Way (US sales only)</span><span class="c">DS</span><span class="c">Role-Playing</span><span class="c">Atlus</span><span class="c n">0.04</span><span class="c n">2009</span><i></i></div>
        <div class="row"><b class="rh">51</b><span class="c a">Roswell Conspiracies: Aliens</span><span class="c">PS</span><span class="c">Action</span><span class="c">Red Storm Entertainment</span><span class="c n">0.04</span><span class="c n">2001</span><i></i></div>
        <div class="cursor"></div>
    </main>

    <!-- sheet tabs -->
    <section class="sheet-tabs">
        <i class="nav-left"></i>
        <i class="nav-right"></i>
        <span class="sheet-tab">vgsales</span>
        <span class="add-sheet">+</span>
        <i class="tabs-sep"></i>
    </section>

    <!-- status bar -->
    <footer class="status">
        <span class="ready">Ready</span>
        <svg width="32" height="36" viewBox="0 0 32 36"><circle cx="15" cy="5" r="4" fill="none" stroke="#666" stroke-width="1.8"/><path d="M2 6c2 5 6 7 9 7v8c0 3-3 4-3 7s1 6 4 7M28 6c-2 5-6 7-9 7v8" fill="none" stroke="#666" stroke-width="1.8"/><path d="M15 28l4 6 11-12" fill="none" stroke="#666" stroke-width="1.8"/></svg>
        <span class="a11y">Accessibility: Good to go</span>
        <div class="status-right">
            <span class="view on">
                <svg width="26" height="34" viewBox="0 0 26 34"><rect width="26" height="34" fill="#fff"/><path d="M8.5 0v34M17.5 0v34M0 11h26M0 22.5h26" stroke="#a6a6a6" stroke-width="2"/></svg>
            </span>
            <span class="view">
                <svg width="28" height="34" viewBox="0 0 28 34"><rect x="1" y="1" width="26" height="32" fill="none" stroke="#666" stroke-width="2"/><rect x="6" y="6" width="16" height="22" fill="none" stroke="#666" stroke-width="2"/><path d="M9 12h10M9 17h10M9 22h10" stroke="#666" stroke-width="2"/></svg>
            </span>
            <span class="view">
                <svg width="28" height="34" viewBox="0 0 28 34"><path d="M1 1h26v32H1zM1 19h16V1M17 1v18M10 1v18" fill="none" stroke="#666" stroke-width="2"/></svg>
            </span>
            <i class="zoom-minus"></i>
            <div class="slider"><i class="knob"></i></div>
            <i class="zoom-plus"></i>
            <span class="zoom-pct">100%</span>
        </div>
    </footer>
</body>

</html>
```

FILE: styles.css
```css
* {
    box-sizing: border-box;
}

html,
body {
    margin: 0;
    height: 2100px;
    width: 3360px;
    overflow: hidden;
}

body {
    display: flex;
    flex-direction: column;
    background-color: #f5f5f5;
    color: #1d1d1d;
    font-family: Inter, "Noto Sans", sans-serif;
    font-size: 21px;
}

.defs {
    position: absolute;
}

.chev {
    color: #404040;
    flex: none;
}

/* title bar */
.title-bar {
    display: grid;
    grid-template-columns: 1493px 1224px 586px 1fr;
    align-items: center;
    height: 84px;
    padding-bottom: 4px;
    flex: none;
}

.quick {
    display: flex;
    align-items: center;
    padding-left: 43px;
}

.autosave {
    width: 111px;
    font-size: 22px;
    color: #555;
}

.toggle {
    position: relative;
    width: 56px;
    height: 28px;
    border-radius: 14px;
    background: linear-gradient(90deg, #c8c8c8, #777);
}

.toggle::after {
    content: "";
    position: absolute;
    left: 1px;
    top: 1px;
    width: 26px;
    height: 26px;
    border-radius: 50%;
    background-color: #fff;
    box-shadow: 0 0 2px #666;
}

.q-home {
    margin-left: 26px;
}

.q-save {
    margin-left: 24px;
}

.q-saveas {
    margin-left: 25px;
}

.q-undo {
    margin-left: 25px;
}

.q-chev {
    margin-left: 18px;
    color: #b8b8b8;
}

.q-redo {
    margin-left: 22px;
}

.q-dots {
    margin-left: 26px;
}

.doc-title {
    display: flex;
    align-items: center;
    font-size: 24px;
}

.doc-name {
    margin-left: 9px;
    color: #404040;
}

.doc-state {
    margin-left: 8px;
    color: #777;
    letter-spacing: -0.4px;
}

.doc-chev {
    margin-left: 9px;
    color: #777;
}

.x-mark {
    font-family: "Liberation Sans", sans-serif;
    font-size: 13px;
    font-weight: bold;
    fill: #fff;
}

.search {
    display: flex;
    align-items: center;
    gap: 12px;
    width: 558px;
    height: 43px;
    padding-left: 13px;
    border: 2px solid #ebebeb;
    border-radius: 10px;
    color: #7d7d7d;
    font-size: 24px;
    font-weight: 500;
}

/* ribbon tabs */
.tabs {
    display: flex;
    height: 48px;
    flex: none;
    padding: 0 20px 0 22px;
    gap: 49.5px;
    font-size: 26px;
}

.tab {
    height: 48px;
    line-height: 42px;
    border-bottom: 6px solid transparent;
    color: #333;
}

.tab.active {
    font-weight: 700;
    border-bottom-color: #33734a;
    border-bottom-left-radius: 3px;
    border-bottom-right-radius: 3px;
}

.tab-actions {
    display: flex;
    align-items: center;
    gap: 21px;
    margin-left: auto;
}

.comments,
.share {
    display: flex;
    align-items: center;
    height: 46px;
    padding: 0;
    border: none;
    font-family: inherit;
    font-size: 25px;
}

.comments {
    width: 203px;
    gap: 10px;
    padding-left: 15px;
    border-radius: 12px;
    background-color: #fff;
    box-shadow: 0 1px 3px #b0b0b0;
    color: #1d1d1d;
}

.share {
    width: 174px;
    height: 48px;
    gap: 11px;
    padding-left: 19px;
    border-radius: 12px;
    background-color: #38764a;
    color: #f3f3f3;
}

.share-chev {
    margin-left: 3px;
    color: #fff;
}

/* ribbon */
.ribbon {
    display: flex;
    height: 152px;
    flex: none;
    padding-top: 12px;
}

.group {
    display: flex;
    height: 124px;
    border-right: 2px solid #cfcfcf;
    flex: none;
}

.g-clip {
    width: 276px;
    padding-left: 14px;
}

.g-font {
    width: 540px;
    flex-direction: column;
}

.g-align {
    width: 324px;
    flex-direction: column;
    padding-left: 17px;
}

.g-wrap {
    width: 278px;
    flex-direction: column;
    padding-left: 24px;
}

.g-number {
    width: 351px;
    flex-direction: column;
    padding-left: 19px;
}

.g-styles {
    width: 365px;
    padding-left: 21px;
}

.g-cells {
    width: 337px;
    padding-left: 15px;
}

.g-edit {
    width: 415px;
    padding-left: 27px;
}

.g-sens {
    width: 153px;
    justify-content: center;
}

.g-addins {
    width: 131px;
    justify-content: center;
}

.g-analyze {
    border-right: none;
    width: 128px;
    justify-content: center;
}

.big {
    display: flex;
    flex-direction: column;
    align-items: center;
    flex: none;
    margin-top: 6px;
}

.ico {
    display: flex;
    align-items: center;
    gap: 8px;
    height: 64px;
}

.big-label {
    margin-top: 9px;
    line-height: 24px;
    text-align: center;
}

.paste {
    width: 112px;
}

.paste .ico {
    width: 100%;
    padding-left: 20px;
    gap: 10px;
}

.paste .big-label {
    margin-right: 6px;
}

.w-cond {
    width: 120px;
}

.w-table {
    width: 106px;
}

.w-cellst {
    width: 94px;
}

.w-cell,
.w-edit {
    width: 101px;
}

.w-sens,
.w-addins,
.w-analyze {
    width: 120px;
}

.sens-chev {
    color: #b8b8b8;
}

.sens-label {
    color: #9a9a9a;
}

.small-list {
    display: flex;
    flex-direction: column;
    width: 166px;
    height: 132px;
    flex: none;
    margin-top: 1px;
}

.g-clip .small-list {
    width: 134px;
}

.small {
    display: flex;
    align-items: center;
    height: 44px;
    flex: none;
    white-space: nowrap;
}

.small svg:first-child {
    margin-right: 12px;
}

.small .chev {
    margin-left: 13px;
}

.select {
    display: flex;
    align-items: center;
    justify-content: space-between;
    height: 48px;
    padding: 0 12px 0 10px;
    border: 2px solid #d8d8d8;
    border-radius: 8px;
    background-color: #fff;
    color: #111;
    font-size: 24px;
}

.font-row-a {
    display: flex;
    align-items: center;
    margin: 10px 0 0 20px;
    gap: 5px;
}

.font-name {
    width: 281px;
}

.font-size {
    width: 107px;
}

.grow,
.shrink {
    display: flex;
    font-size: 38px;
    font-weight: 300;
    line-height: 48px;
    color: #404040;
}

.grow {
    margin-left: 9px;
}

.shrink {
    margin-left: 17px;
    font-size: 32px;
}

.grow svg,
.shrink svg {
    margin-top: 8px;
}

.font-row-b {
    display: grid;
    grid-template-columns: 52px 52px 52px 18px 42px 37px 39px 18px 60px 12px 68px 8px;
    align-items: center;
    justify-items: center;
    height: 48px;
    margin: 14px 0 0 18px;
    width: 458px;
}

.t-bold {
    font-family: "Liberation Sans", sans-serif;
    font-size: 30px;
    font-weight: 700;
    color: #333;
}

.t-ital {
    font-family: "Liberation Serif", serif;
    font-size: 32px;
    font-style: italic;
    color: #333;
}

.t-under {
    font-size: 28px;
    font-weight: 300;
    line-height: 30px;
    border-bottom: 3px solid #333;
    color: #333;
}

.t-color {
    font-size: 30px;
    font-weight: 300;
    line-height: 32px;
    width: 32px;
    text-align: center;
    border-bottom: 8px solid #e8352a;
    color: #333;
}

.vsep {
    display: block;
    width: 2px;
    height: 36px;
    background-color: #d0d0d0;
}

.align-row-a,
.align-row-b {
    display: grid;
    align-items: center;
    justify-items: center;
    height: 48px;
}

.align-row-a {
    grid-template-columns: 52px 53px 52px 30px 50px 24px;
    margin-top: 10px;
}

.align-row-b {
    grid-template-columns: 52px 53px 52px 30px 52px 52px;
    margin-top: 14px;
}

.on-box {
    display: flex;
    align-items: center;
    justify-content: center;
    width: 48px;
    height: 48px;
    border-radius: 6px;
    background-color: #c1c1c1;
}

.orient {
    font-size: 20px;
    fill: #404040;
}

.wrap-item {
    display: flex;
    align-items: center;
    height: 48px;
    margin-top: 10px;
    gap: 12px;
}

.wrap-item + .wrap-item {
    margin-top: 14px;
}

.wrap-ab {
    font-size: 19px;
    fill: #404040;
}

.num-format {
    width: 309px;
    margin-top: 10px;
}

.number-row {
    display: grid;
    grid-template-columns: 46px 28px 50px 58px 22px 59px 45px;
    align-items: center;
    justify-items: center;
    height: 48px;
    margin-top: 14px;
}

.t-dollar,
.t-pct {
    font-size: 34px;
    font-weight: 300;
    color: #404040;
}

.t-comma {
    padding-bottom: 18px;
    font-family: "Liberation Serif", serif;
    font-size: 46px;
    font-weight: 700;
    line-height: 30px;
    color: #404040;
}

.dec {
    font-size: 17px;
    fill: #404040;
}

.az-a {
    font-size: 32px;
    font-weight: 300;
    fill: #3d8bcd;
}

.az-z {
    font-size: 32px;
    font-weight: 300;
    fill: #404040;
}

/* formula bar */
.formula-bar {
    position: relative;
    display: flex;
    align-items: center;
    height: 56px;
    border-top: 3px solid #c8c8c8;
    border-bottom: 2px solid #c0c0c0;
    background-color: #fff;
    flex: none;
    font-size: 24px;
}

.name-box {
    display: flex;
    align-items: center;
    justify-content: space-between;
    width: 171px;
    height: 100%;
    padding: 0 4px 0 20px;
    border-right: 3px solid #c8c8c8;
    color: #222;
}

.stepper {
    display: flex;
    flex-direction: column;
    gap: 7px;
}

.tri-up,
.tri-down {
    display: block;
    width: 0;
    height: 0;
    border-left: 7px solid transparent;
    border-right: 7px solid transparent;
}

.tri-up {
    border-bottom: 11px solid #666;
}

.tri-down {
    border-top: 11px solid #666;
}

.fb-x {
    margin-left: 28px;
}

.fb-ok {
    margin-left: 33px;
}

.fx {
    width: 36px;
    margin-left: 32px;
    font-family: "Liberation Serif", serif;
    font-size: 32px;
    font-style: italic;
    color: #404040;
}

.fb-sep {
    width: 1px;
    height: 30px;
    margin-left: 5px;
    background-color: #d8d8d8;
}

.fb-value {
    margin-left: 14px;
    font-family: Roboto, sans-serif;
    font-size: 25px;
    letter-spacing: -0.6px;
    color: #111;
}

.fb-more {
    margin-left: auto;
    margin-right: 17px;
}

/* sheet */
.sheet {
    position: relative;
    flex: 1;
    min-height: 0;
    margin-top: 3px;
    border-top: 2px solid #d0d0d0;
    overflow: hidden;
    background-color: #fff;
    font-family: Roboto, sans-serif;
    font-size: 23px;
    letter-spacing: -0.7px;
    color: #111;
}

.col-heads {
    display: flex;
    height: 43px;
    border-bottom: 3px solid #cacaca;
    background-color: #f6f6f6;
    color: #666;
}

.corner {
    width: 45px;
    flex: none;
    border-right: 2px solid #d0d0d0;
    padding: 7px 0 0 10px;
}

.corner i {
    display: block;
    width: 0;
    height: 0;
    border-left: 30px solid transparent;
    border-bottom: 30px solid #dddddd;
}

.col-heads span {
    width: 130px;
    flex: none;
    line-height: 42px;
    text-align: center;
    border-right: 2px solid #dfdfdf;
}

.col-heads .sel {
    background-color: #e9e9e9;
    color: #33734a;
}

.row {
    display: flex;
    height: 32px;
    border-bottom: 2px solid #d6d6d6;
    line-height: 33px;
}

.rh {
    width: 45px;
    flex: none;
    text-align: center;
    font-weight: 400;
    background-color: #f6f6f6;
    border-right: 2px solid #d0d0d0;
    color: #666;
}

.first .rh {
    background-color: #e9e9e9;
    border-right: 3px solid #33734a;
    color: #33734a;
}

.c {
    width: 130px;
    flex: none;
    padding: 0 4px;
    border-right: 2px solid #d6d6d6;
    overflow: hidden;
    white-space: nowrap;
}

.c.a {
    width: 260px;
}

.c.n {
    padding-right: 5px;
    text-align: right;
}

/* empty columns H onward, drawn as one strip */
.row i {
    flex: 1;
    background-image: repeating-linear-gradient(90deg, transparent 0 128px, #d6d6d6 128px 130px);
}

.cursor {
    position: absolute;
    left: 303px;
    top: 40px;
    width: 134px;
    height: 36px;
    border: 4px solid #33734a;
}

.cursor::after {
    content: "";
    position: absolute;
    right: -7px;
    bottom: -7px;
    width: 10px;
    height: 10px;
    background-color: #33734a;
    border: 1px solid #fff;
}

/* sheet tabs */
.sheet-tabs {
    display: flex;
    align-items: flex-start;
    height: 52px;
    flex: none;
    padding-left: 30px;
    border-top: 2px solid #cfcfcf;
    background: linear-gradient(#f3f3f3, #ececec);
}

.nav-left,
.nav-right {
    display: block;
    width: 0;
    height: 0;
    margin-top: 17px;
    border-top: 11px solid transparent;
    border-bottom: 11px solid transparent;
}

.nav-left {
    border-right: 14px solid #b4b4b4;
}

.nav-right {
    margin-left: 32px;
    border-left: 14px solid #b4b4b4;
}

.sheet-tab {
    width: 158px;
    height: 42px;
    margin-left: 31px;
    border-radius: 0 0 8px 8px;
    background-color: #fff;
    box-shadow: 0 1px 2px #999;
    color: #3d7f53;
    font-size: 24px;
    font-weight: 700;
    line-height: 42px;
    text-align: center;
}

.add-sheet {
    width: 40px;
    margin-left: 19px;
    font-size: 36px;
    font-weight: 600;
    line-height: 40px;
    text-align: center;
    color: #666;
}

.tabs-sep {
    display: block;
    width: 2px;
    height: 40px;
    margin-left: 16px;
    background-color: #d6d6d6;
}

/* status bar */
.status {
    display: flex;
    align-items: center;
    height: 45px;
    flex: none;
    padding-left: 49px;
    border-top: 2px solid #a8a8a8;
    background: linear-gradient(#e4e4e4, #d8d8d8);
    color: #666;
    font-size: 24px;
}

.ready {
    width: 108px;
}

.a11y {
    margin-left: 5px;
}

.status-right {
    display: flex;
    align-items: center;
    height: 100%;
    margin-left: auto;
}

.view {
    display: flex;
    align-items: center;
    justify-content: center;
    width: 71px;
    height: 100%;
}

.view.on {
    width: 74px;
    background-color: #a6a6a6;
}

.zoom-minus,
.zoom-plus {
    position: relative;
    display: block;
    width: 16px;
    height: 5px;
    background-color: #666;
}

.zoom-minus {
    margin-left: 16px;
}

.zoom-plus::after {
    content: "";
    position: absolute;
    left: 6px;
    top: -6px;
    width: 5px;
    height: 16px;
    background-color: #666;
}

.slider {
    position: relative;
    width: 200px;
    height: 11px;
    margin: 0 13px 0 14px;
    border-radius: 6px;
    background-color: #9a9a9a;
}

.knob {
    position: absolute;
    left: 84px;
    top: -11px;
    width: 32px;
    height: 32px;
    border-radius: 50%;
    background-color: #fff;
    box-shadow: 0 1px 2px #888;
}

.zoom-pct {
    width: 146px;
    padding: 0 50px 0 34px;
    font-size: 24px;
}
```
